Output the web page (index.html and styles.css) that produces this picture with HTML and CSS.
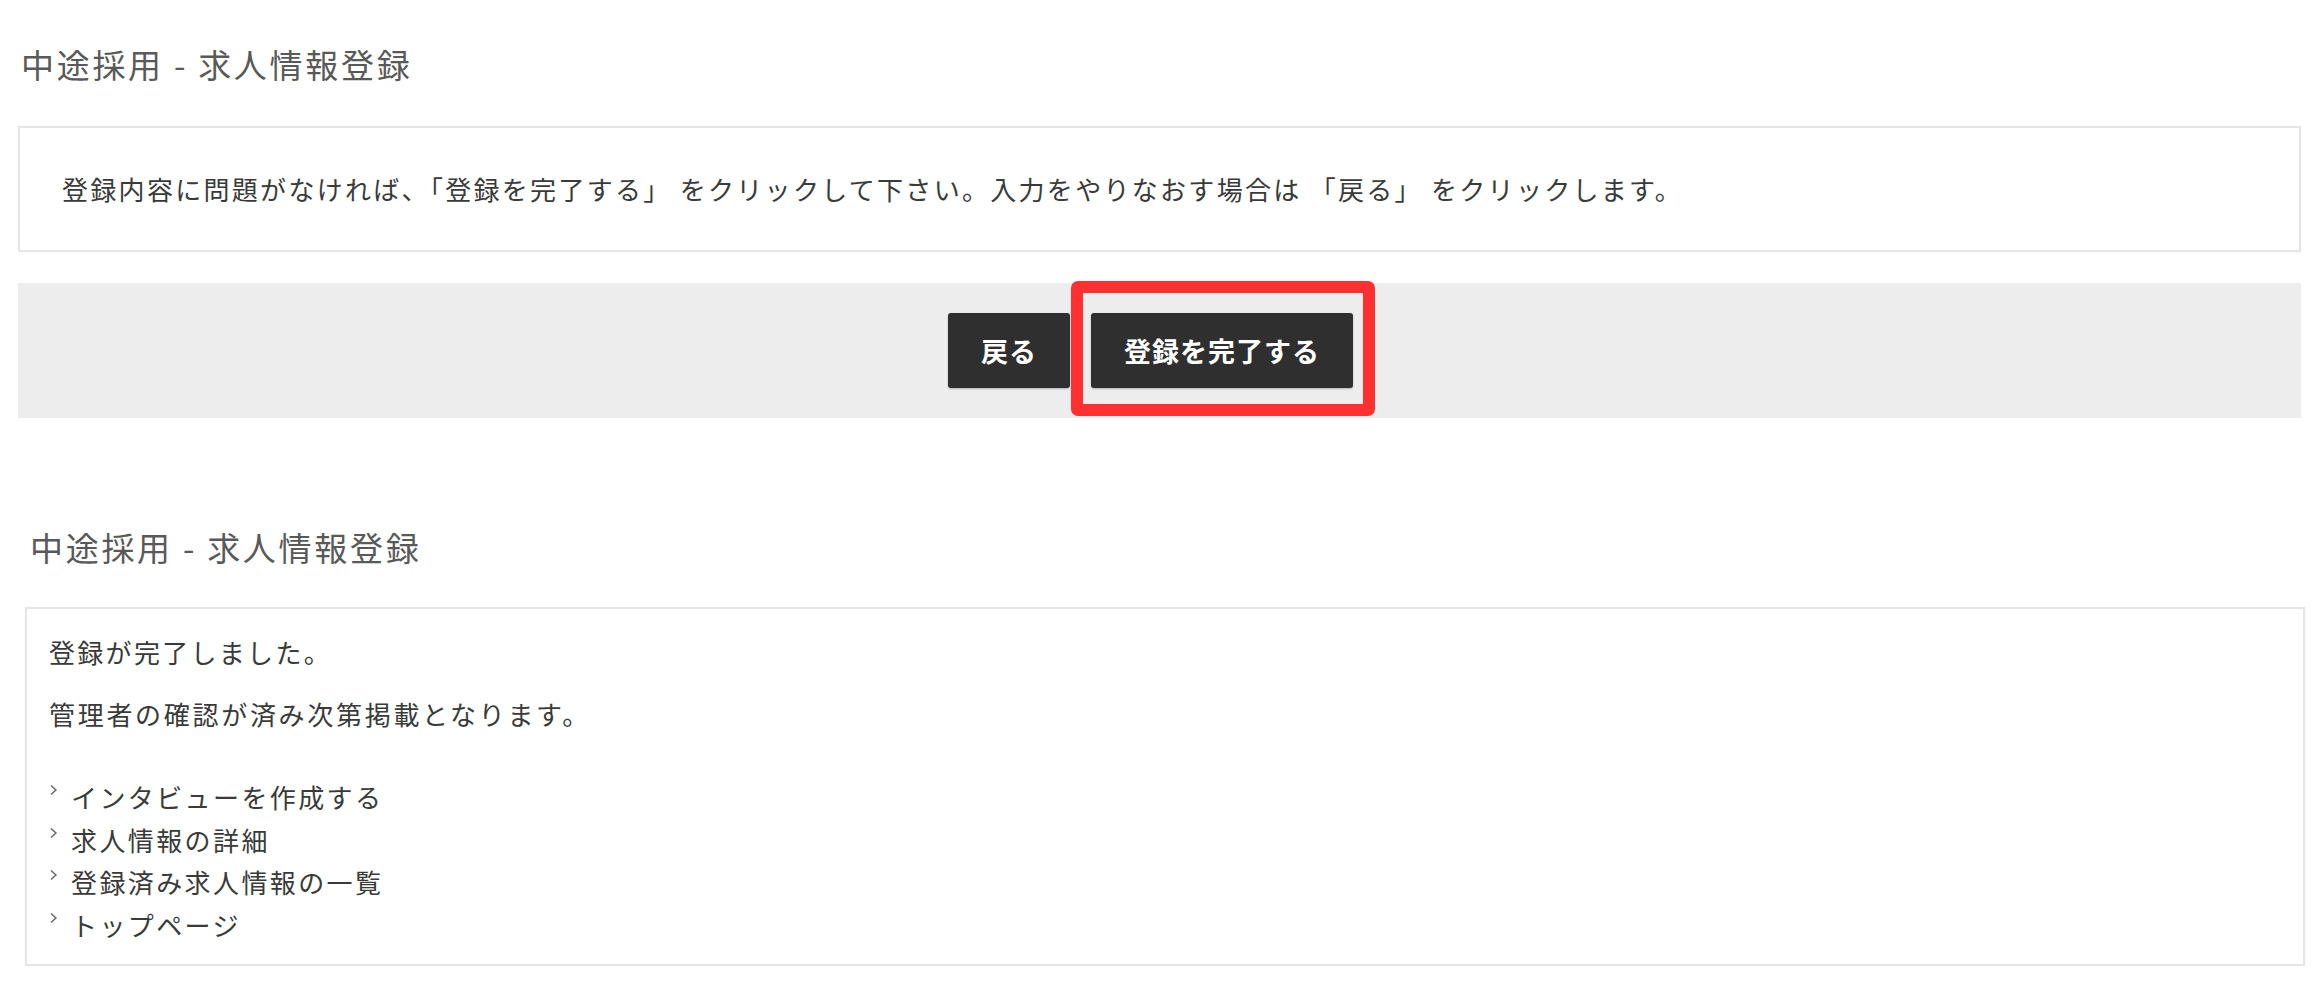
FILE: index.html
```html
<!DOCTYPE html>
<html lang="ja">
<head>
    <meta charset="UTF-8">
    <meta name="viewport" content="width=device-width, initial-scale=1.0">
    <title>中途採用 - 求人情報登録</title>
    <link rel="stylesheet" href="styles.css">
</head>
<body>
    <!-- 確認画面 -->
    <section class="step step-confirm">
        <h1 class="step-title">中途採用 - 求人情報登録</h1>
        <div class="panel panel-notice">
            <p>登録内容に問題がなければ、「登録を完了する」 をクリックして下さい。入力をやりなおす場合は 「戻る」 をクリックします。</p>
        </div>
        <div class="action-bar">
            <button class="btn">戻る</button>
            <span class="btn-wrap">
                <button class="btn">登録を完了する</button>
                <span class="highlight"></span>
            </span>
        </div>
    </section>

    <!-- 完了画面 -->
    <section class="step step-done">
        <h1 class="step-title">中途採用 - 求人情報登録</h1>
        <div class="panel panel-result">
            <p>登録が完了しました。</p>
            <p>管理者の確認が済み次第掲載となります。</p>
            <ul class="link-list">
                <li><svg class="chev" width="9" height="12" viewBox="0 0 9 12"><polyline points="2,1.5 7,6 2,10.5" fill="none" stroke="#666" stroke-width="1.4"/></svg><a href="#">インタビューを作成する</a></li>
                <li><svg class="chev" width="9" height="12" viewBox="0 0 9 12"><polyline points="2,1.5 7,6 2,10.5" fill="none" stroke="#666" stroke-width="1.4"/></svg><a href="#">求人情報の詳細</a></li>
                <li><svg class="chev" width="9" height="12" viewBox="0 0 9 12"><polyline points="2,1.5 7,6 2,10.5" fill="none" stroke="#666" stroke-width="1.4"/></svg><a href="#">登録済み求人情報の一覧</a></li>
                <li><svg class="chev" width="9" height="12" viewBox="0 0 9 12"><polyline points="2,1.5 7,6 2,10.5" fill="none" stroke="#666" stroke-width="1.4"/></svg><a href="#">トップページ</a></li>
            </ul>
        </div>
    </section>
</body>
</html>
```

FILE: styles.css
```css
:root {
    --title-color: #595959;
    --text-color: #3a3a3a;
    --border-color: #e6e6e6;
    --band-bg: #ededed;
    --btn-bg: #2f2f2f;
    --mark-color: #ff3030;
}

* {
    box-sizing: border-box;
    margin: 0;
    padding: 0;
}

body {
    font-family: "Noto Sans CJK JP", "Noto Sans", sans-serif;
    color: var(--text-color);
    background: #ffffff;
}

.step-title {
    font-size: 33px;
    font-weight: 400;
    line-height: 46px;
    letter-spacing: 2.7px;
    color: var(--title-color);
}

.panel {
    background: #ffffff;
    border: 2px solid var(--border-color);
    box-shadow: 0 1px 2px rgba(0, 0, 0, 0.04);
}

.panel p {
    font-size: 26px;
    line-height: 40px;
    letter-spacing: 2.3px;
}

/* 確認画面 */
.step-confirm {
    padding: 41px 22px 0 18px;
}

.step-confirm .step-title {
    margin-left: 3px;
}

.panel-notice {
    margin-top: 39px;
    height: 126px;
    padding: 41px 42px;
}

.action-bar {
    margin-top: 31px;
    height: 135px;
    background: var(--band-bg);
    display: flex;
    justify-content: center;
    align-items: center;
    gap: 21px;
    padding-right: 18px;
}

.btn {
    height: 75px;
    padding: 0 33px;
    background: var(--btn-bg);
    color: #ffffff;
    border: none;
    border-radius: 3px;
    font-family: inherit;
    font-size: 27px;
    font-weight: 700;
    letter-spacing: 1px;
    box-shadow: 0 1px 2px rgba(0, 0, 0, 0.25);
}

.btn-wrap {
    position: relative;
    display: block;
}

.btn-wrap .btn {
    display: block;
}

.highlight {
    position: absolute;
    left: -20px;
    top: -32px;
    right: -22px;
    bottom: -28px;
    border: 12px solid var(--mark-color);
    border-radius: 7px;
}

/* 完了画面 */
.step-done {
    padding: 106px 18px 0 25px;
}

.step-done .step-title {
    margin-left: 5px;
}

.panel-result {
    margin-top: 37px;
    height: 359px;
    padding: 23px 22px 0 22px;
}

.panel-result p + p {
    margin-top: 22px;
}

.panel-result p:nth-child(2) {
    letter-spacing: 2.7px;
}

.link-list {
    list-style: none;
    margin-top: 42px;
}

.link-list li {
    display: flex;
    align-items: flex-start;
    font-size: 26px;
    line-height: 42.5px;
    letter-spacing: 2.4px;
}

.link-list a {
    color: var(--text-color);
    text-decoration: none;
}

.chev {
    flex: none;
    margin: 8px 13px 0 0;
}
```
